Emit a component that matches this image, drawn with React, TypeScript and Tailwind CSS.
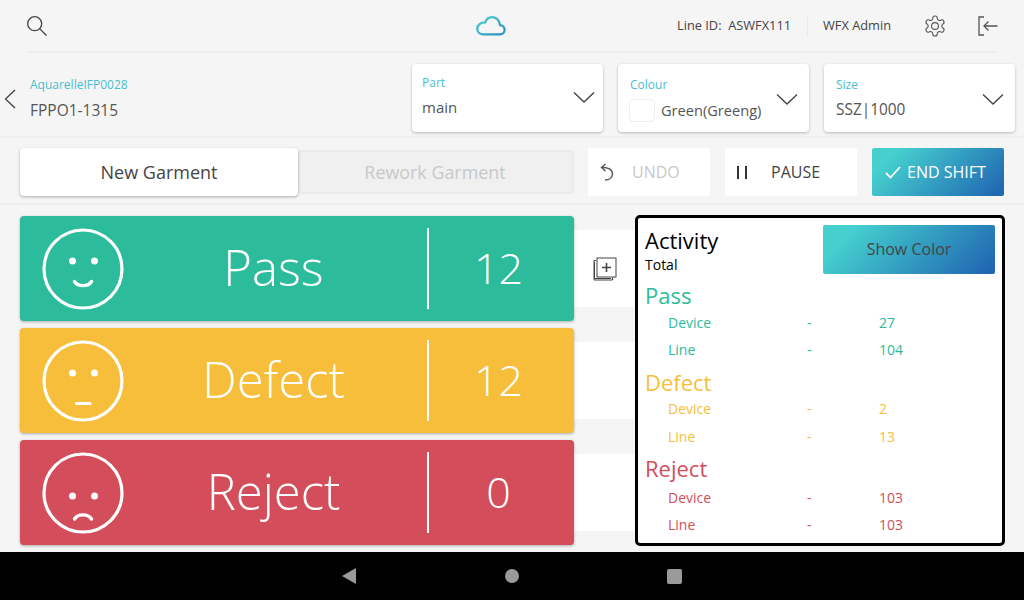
import React from "react";

const font = { fontFamily: '"Open Sans", sans-serif' };

function Chevron({ className }: { className: string }) {
  return (
    <svg className={className} width="22" height="12" viewBox="0 0 22 12" fill="none" stroke="#444" strokeWidth="1.4">
      <path d="M1 1.5 L11 11 L21 1.5" />
    </svg>
  );
}

function Select({ label, value, swatch, tight, size }: { label: string; value: string; swatch?: boolean; tight?: boolean; size: string }) {
  return (
    <div className={`relative w-[191px] h-[68px] bg-white rounded-[4px] shadow-[0_1px_3px_rgba(0,0,0,0.25)] flex flex-col ${tight ? "pl-[10px]" : "pl-3"}`}>
      <div className={`text-[12px] leading-[17px] text-[#45bfd0] ${tight ? "mt-[10px]" : "mt-[12px]"}`}>{label}</div>
      <div className={`flex items-center gap-[6px] leading-[24px] text-[#555] ${size} ${tight ? "mt-[4px]" : "mt-[5px]"}`}>
        {swatch && <span className="w-[26px] h-[23px] bg-white border border-[#eeeeee] rounded-[4px] -ml-[1px]" />}
        <span>{value}</span>
      </div>
      <Chevron className={`absolute ${tight ? "top-[27px] right-[8px]" : "top-[29px] right-[11px]"}`} />
    </div>
  );
}

function Face({ mouth, eye }: { mouth: React.ReactNode; eye: number }) {
  return (
    <svg width="82" height="82" viewBox="0 0 82 82" fill="none" stroke="white" className="ml-[22px] shrink-0">
      <circle cx="41" cy="41" r="39" strokeWidth="3.2" />
      <circle cx="30.5" cy={eye} r="3.5" fill="white" stroke="none" />
      <circle cx="52.5" cy={eye} r="3.5" fill="white" stroke="none" />
      {mouth}
    </svg>
  );
}

function Row({ bg, label, count, mouth, eye }: { bg: string; label: string; count: string; mouth: React.ReactNode; eye: number }) {
  return (
    <div className={`relative z-10 h-[105px] w-[554px] rounded-[4px] shadow-[0_1px_3px_rgba(0,0,0,0.3)] flex items-center text-white ${bg}`}>
      <Face mouth={mouth} eye={eye} />
      <div className="w-[299px] text-center text-[49px] font-light leading-none -mt-[2px]">{label}</div>
      <div className="ml-[4px] w-[2px] h-[81px] bg-white" />
      <div className="flex-1 pr-[6px] text-center text-[43px] font-light leading-none -mt-[2px]">{count}</div>
    </div>
  );
}

function SidePad({ children }: { children?: React.ReactNode }) {
  return (
    <div className="h-[105px] flex items-center">
      <div className="w-[61px] h-[77px] bg-white flex items-center justify-center">{children}</div>
    </div>
  );
}

function Stat({ color, title, device, line, titleH, firstH }: { color: string; title: string; device: string; line: string; titleH: string; firstH: string }) {
  return (
    <div className={color}>
      <div className={`text-[22px] ${titleH}`}>{title}</div>
      {[["Device", device, firstH], ["Line", line, "h-[27px]"]].map(([k, v, h]) => (
        <div key={k} className={`flex text-[14px] leading-[27px] ${h}`}>
          <span className="w-[162px] pl-[23px]">{k}</span>
          <span className="w-[72px]">-</span>
          <span>{v}</span>
        </div>
      ))}
    </div>
  );
}

export default function App() {
  return (
    <div style={font} className="w-[1024px] h-[600px] overflow-hidden flex flex-col bg-[#f5f5f5]">
      {/* top bar */}
      <div className="h-[53px] mx-[26px] w-[972px] border-b-2 border-[#eeeeee] flex items-center shrink-0">
        <svg width="20" height="20" viewBox="0 0 20 20" fill="none" stroke="#444" strokeWidth="1.3" className="ml-[1px]">
          <circle cx="7.7" cy="7.7" r="7" />
          <path d="M12.6 12.6 L19.5 19.5" />
        </svg>
        <svg width="30" height="21" viewBox="0 0 32 22" fill="none" strokeWidth="2.4" stroke="url(#cl)" className="ml-[429px]">
          <defs>
            <linearGradient id="cl" x1="0" y1="0" x2="1" y2="1">
              <stop offset="0" stopColor="#45d0cf" />
              <stop offset="1" stopColor="#2a8fc0" />
            </linearGradient>
          </defs>
          <path d="M8 20.5 H25.5 C28.5 20.5 30.5 18.2 30.5 15.5 C30.5 12.8 28.4 10.6 25.6 10.6 C25.2 5.4 21.6 2 17.4 2 C13.6 2 10.8 4.4 9.8 7.8 C5 7.6 1.3 10.5 1.3 14.4 C1.3 17.8 4 20.5 8 20.5 Z" />
        </svg>
        <div className="flex-1" />
        <div className="flex items-center text-[12.8px] text-[#444]">
          <span className="whitespace-pre">Line ID:  ASWFX111</span>
          <span className="w-[1px] h-[20px] bg-[#e8e8e8] ml-[16px] mr-[15px]" />
          <span>WFX Admin</span>
        </div>
        <svg width="24" height="24" viewBox="0 0 24 24" fill="none" stroke="#555" strokeWidth="1.1" className="ml-[32px]">
          <path d="M12.22 2h-.44a2 2 0 0 0-2 2v.18a2 2 0 0 1-1 1.73l-.43.25a2 2 0 0 1-2 0l-.15-.08a2 2 0 0 0-2.73.73l-.22.38a2 2 0 0 0 .73 2.73l.15.1a2 2 0 0 1 1 1.72v.51a2 2 0 0 1-1 1.74l-.15.09a2 2 0 0 0-.73 2.73l.22.38a2 2 0 0 0 2.73.73l.15-.08a2 2 0 0 1 2 0l.43.25a2 2 0 0 1 1 1.73V20a2 2 0 0 0 2 2h.44a2 2 0 0 0 2-2v-.18a2 2 0 0 1 1-1.73l.43-.25a2 2 0 0 1 2 0l.15.08a2 2 0 0 0 2.73-.73l.22-.39a2 2 0 0 0-.73-2.73l-.15-.08a2 2 0 0 1-1-1.74v-.5a2 2 0 0 1 1-1.74l.15-.09a2 2 0 0 0 .73-2.73l-.22-.38a2 2 0 0 0-2.73-.73l-.15.08a2 2 0 0 1-2 0l-.43-.25a2 2 0 0 1-1-1.73V4a2 2 0 0 0-2-2z" />
          <circle cx="12" cy="12" r="3.4" />
        </svg>
        <svg width="20" height="20" viewBox="0 0 20 20" fill="none" stroke="#555" strokeWidth="1.3" className="ml-[31px]">
          <path d="M6 1 H1 V19 H6" />
          <path d="M19.5 10 H6 M10.5 5.5 L6 10 L10.5 14.5" />
        </svg>
      </div>

      {/* order row */}
      <div className="h-[85px] border-b-2 border-[#eeeeee] flex items-start pt-[11px] shrink-0">
        <svg width="12" height="20" viewBox="0 0 12 20" fill="none" stroke="#444" strokeWidth="1.3" className="ml-[4px] mt-[25px]">
          <path d="M11 1 L1.5 10 L11 19" />
        </svg>
        <div className="ml-[14px] w-[382px] mt-[12px]">
          <div className="text-[12px] leading-[17px] text-[#45bfd0]">AquarelleIFP0028</div>
          <div className="text-[15.5px] leading-[24px] mt-[5px] text-[#555]">FPPO1-1315</div>
        </div>
        <div className="flex gap-[15px]">
          <Select label="Part" value="main" tight size="text-[15px]" />
          <Select label="Colour" value="Green(Greeng)" swatch size="text-[14.6px]" />
          <Select label="Size" value="SSZ|1000" size="text-[15.4px]" />
        </div>
      </div>

      {/* actions */}
      <div className="h-[67px] border-b-2 border-[#eeeeee] flex items-start pt-[10px] pl-[20px] shrink-0">
        <div className="relative z-10 w-[278px] h-[48px] bg-white rounded-[4px] shadow-[0_1px_3px_rgba(0,0,0,0.3)] flex items-center justify-center text-[18px] text-[#444]">New Garment</div>
        <div className="mt-[2px] w-[276px] h-[44px] bg-[#f0f0f0] border-2 border-[#eaeaea] rounded-[4px] flex items-center justify-center pr-[2px] text-[17.9px] text-[#c8c8c8]">Rework Garment</div>
        <div className="ml-[14px] w-[122px] h-[48px] bg-white flex items-center text-[16px] text-[#c8c8c8]">
          <svg width="14" height="18" viewBox="0 0 14 18" fill="none" stroke="#555" strokeWidth="1.4" className="ml-[12px]">
            <path d="M5.5 1 L1.5 4.5 L5.5 8" />
            <path d="M1.5 4.5 C8 4 12.5 6.5 12.5 11 C12.5 14.5 9.5 17 5 17" />
          </svg>
          <span className="ml-[18px]">UNDO</span>
        </div>
        <div className="ml-[15px] w-[132px] h-[48px] bg-white flex items-center text-[16px] text-[#444]">
          <span className="ml-[12px] w-[10px] h-[13px] border-x-2 border-[#333]" />
          <span className="ml-[24px]">PAUSE</span>
        </div>
        <div className="ml-[15px] w-[132px] h-[48px] rounded-[2px] bg-linear-[135deg] from-[#45d0cf] from-15% to-[#2168b2] to-95% flex items-center text-[16px] text-white">
          <svg width="16" height="13" viewBox="0 0 16 13" fill="none" stroke="white" strokeWidth="1.8" className="ml-[13px]">
            <path d="M1 7 L5.5 11.5 L15 1" />
          </svg>
          <span className="ml-[6px]">END SHIFT</span>
        </div>
      </div>

      {/* main */}
      <div className="flex-1 flex pl-[20px] pt-[11px] min-h-0">
        <div className="flex flex-col gap-[7px]">
          <Row
            bg="bg-[#2cbc9b]"
            label="Pass"
            count="12"
            eye={33}
            mouth={<path d="M32.5 53.5 C36 59 46 59 49.5 53.5" strokeWidth="3.4" strokeLinecap="round" />}
          />
          <Row
            bg="bg-[#f7be3b]"
            label="Defect"
            count="12"
            eye={33}
            mouth={<path d="M34.5 63.5 H48" strokeWidth="3.2" strokeLinecap="round" />}
          />
          <Row
            bg="bg-[#d34e5a]"
            label="Reject"
            count="0"
            eye={44}
            mouth={<path d="M32.5 67 C36 61.5 46 61.5 49.5 67" strokeWidth="3.4" strokeLinecap="round" />}
          />
        </div>
        <div className="flex flex-col gap-[7px]">
          <SidePad>
            <svg width="24" height="24" viewBox="0 0 24 24" fill="none" stroke="#444" strokeWidth="1">
              <path d="M3 3.5 H1 V23 H19.5 V20.5" />
              <path d="M1.5 5 V21.5 H18" />
              <rect x="4" y="1" width="19" height="19" fill="white" />
              <path d="M13.5 6 V15 M9 10.5 H18" strokeWidth="1.6" />
            </svg>
          </SidePad>
          <SidePad />
          <SidePad />
        </div>
        <div className="w-[370px] h-[331px] -mt-[1px] bg-white border-[3px] border-black rounded-[5px] pl-[7px] pr-[7px] pt-[7px]">
          <div className="flex h-[52px]">
            <div className="flex-1 text-black">
              <div className="text-[22px] leading-[27px] mt-[2px]">Activity</div>
              <div className="text-[14px] leading-[20px] mt-[1px]">Total</div>
            </div>
            <div className="w-[172px] h-[49px] rounded-[2px] bg-linear-[135deg] from-[#45d0cf] from-15% to-[#2168b2] to-95% flex items-center justify-center pb-[2px] text-[16px] text-[#444]">Show Color</div>
          </div>
          <div className="mt-[4px] flex flex-col">
            <Stat color="text-[#2cbc9b]" title="Pass" device="27" line="104" titleH="leading-[28px]" firstH="h-[27px]" />
            <Stat color="text-[#f7be3b] mt-[6px]" title="Defect" device="2" line="13" titleH="leading-[26px]" firstH="h-[28px]" />
            <Stat color="text-[#d34e5a] mt-[2px]" title="Reject" device="103" line="103" titleH="leading-[32px]" firstH="h-[27px]" />
          </div>
        </div>
      </div>

      {/* nav */}
      <div className="h-[48px] bg-black flex items-center shrink-0">
        <svg width="14" height="16" viewBox="0 0 14 16" className="ml-[342px]"><path d="M0 8 L14 0 V16 Z" fill="#9a9a9a" /></svg>
        <span className="w-[14px] h-[14px] rounded-full bg-[#9a9a9a] ml-[149px]" />
        <span className="w-[15px] h-[15px] rounded-[2px] bg-[#9a9a9a] ml-[148px]" />
      </div>
    </div>
  );
}
